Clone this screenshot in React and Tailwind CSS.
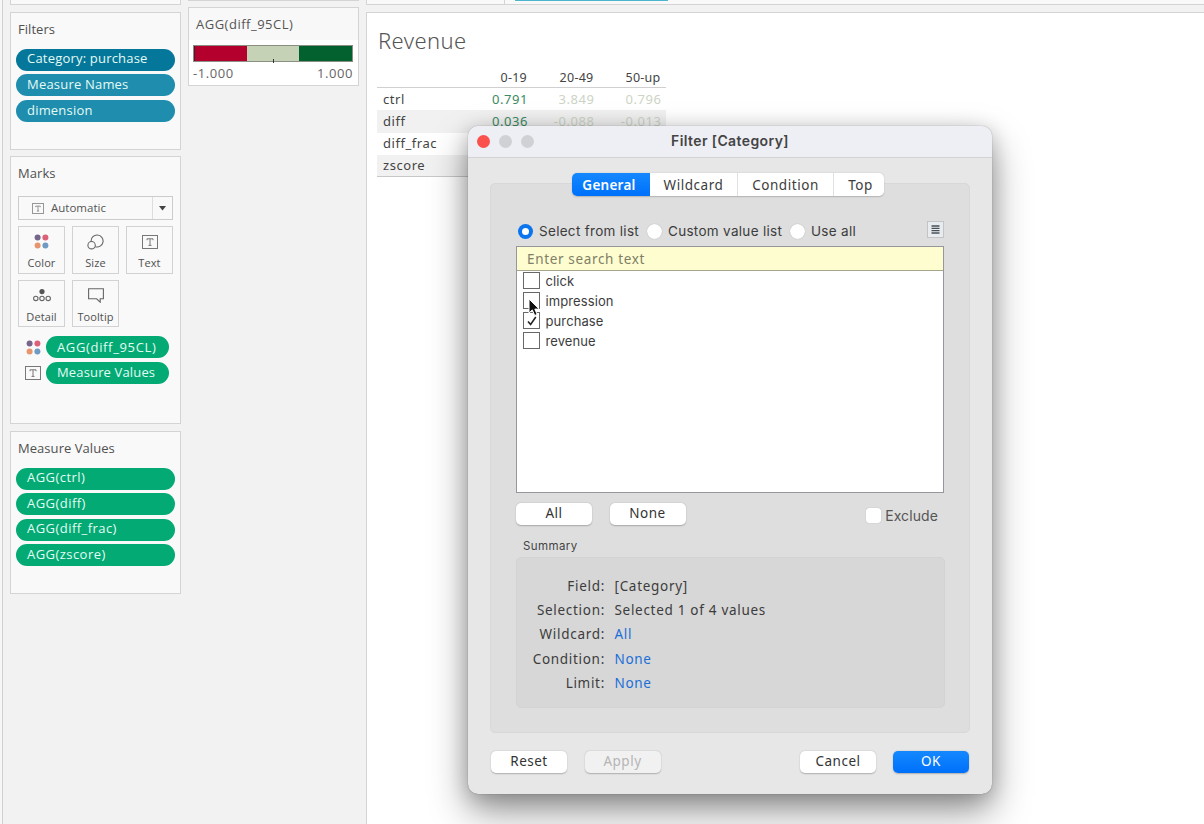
import React, { useState } from "react";

const filterPills = [
  { name: "Category: purchase", color: "bg-[#04779a]" },
  { name: "Measure Names", color: "bg-[#1f8dae]" },
  { name: "dimension", color: "bg-[#1f8dae]" },
];

const measureValues = ["AGG(ctrl)", "AGG(diff)", "AGG(diff_frac)", "AGG(zscore)"];

const rows = [
  { name: "ctrl", values: ["0.791", "3.849", "0.796"] },
  { name: "diff", values: ["0.036", "-0.088", "-0.013"] },
  { name: "diff_frac", values: ["", "", ""] },
  { name: "zscore", values: ["", "", ""] },
];

const tabs = [
  { name: "General", width: "w-[78px] pr-[4px]" },
  { name: "Wildcard", width: "w-[87px]" },
  { name: "Condition", width: "w-[96px]" },
  { name: "Top", width: "w-[51px] pl-[3px]" },
];

const summary = [
  { label: "Field:", value: "[Category]" },
  { label: "Selection:", value: "Selected 1 of 4 values" },
  { label: "Wildcard:", value: "All", link: true },
  { label: "Condition:", value: "None", link: true },
  { label: "Limit:", value: "None", link: true },
];

function TextIcon({ className }) {
  return (
    <svg className={className} viewBox="0 0 16 14" fill="none" stroke="#777" strokeWidth="1">
      <rect x="0.5" y="0.5" width="15" height="13" />
      <path d="M5 5.2V3.8h6v1.4M8 3.8v6.6M6.5 10.4h3" />
    </svg>
  );
}

function ColorIcon({ className }) {
  return (
    <svg className={className} viewBox="0 0 15 15">
      <circle cx="3.6" cy="3.6" r="3" fill="#75658a" />
      <circle cx="11.4" cy="3.6" r="3" fill="#dd5f78" />
      <circle cx="3.6" cy="11.4" r="3" fill="#e8956d" />
      <circle cx="11.4" cy="11.4" r="3" fill="#6f9bc3" />
    </svg>
  );
}

function SizeIcon() {
  return (
    <svg className="w-[17px] h-[16px]" viewBox="0 0 17 16" fill="none" stroke="#666" strokeWidth="1.1">
      <path d="M4.1 7.3A6 6 0 1 1 8.3 12.7" />
      <circle cx="4.6" cy="11.2" r="3.7" />
    </svg>
  );
}

function DetailIcon() {
  return (
    <svg className="w-[18px] h-[14px]" viewBox="0 0 18 14" fill="none" stroke="#666" strokeWidth="1.1">
      <circle cx="9" cy="3.6" r="2.6" fill="#555" stroke="none" />
      <circle cx="2.8" cy="10.4" r="2.2" />
      <circle cx="9" cy="10.4" r="2.2" />
      <circle cx="15.2" cy="10.4" r="2.2" />
    </svg>
  );
}

function TooltipIcon() {
  return (
    <svg className="w-[16px] h-[15px]" viewBox="0 0 16 15" fill="none" stroke="#666" strokeWidth="1.1">
      <path d="M0.6 0.8h14.8v10h-3.2v3.4l-3.6-3.4h-8z" />
    </svg>
  );
}

const markCards = [
  { name: "Color", icon: <ColorIcon className="w-[15px] h-[15px]" /> },
  { name: "Size", icon: <SizeIcon /> },
  { name: "Text", icon: <TextIcon className="w-[16px] h-[14px]" /> },
  { name: "Detail", icon: <DetailIcon /> },
  { name: "Tooltip", icon: <TooltipIcon /> },
];

function Pill({ children, className }) {
  return (
    <div className={`h-[22px] rounded-full flex items-center pl-[11px] text-[13px] text-[#e4fbf4] ${className}`}>
      {children}
    </div>
  );
}

function Panel({ title, className, children }) {
  return (
    <div className={`w-[171px] border border-[#d4d4d4] bg-[#f9f9f9] ${className}`}>
      <div className="h-[35px] pl-[7px] pb-[2px] flex items-center text-[13px] tracking-[0.05px] text-[#505050]">{title}</div>
      {children}
    </div>
  );
}

function Shelves() {
  return (
    <div className="w-[178px] flex flex-col ml-[7px] shrink-0">
      <div className="w-[171px] h-[5px] border border-t-0 border-[#d4d4d4] bg-[#f9f9f9]" />
      <Panel title="Filters" className="mt-[7px] h-[138px]">
        <div className="flex flex-col gap-[3.7px] pl-[5px] pr-[5px] pt-[0.5px]">
          {filterPills.map((p) => (
            <Pill key={p.name} className={`pb-[1px] tracking-[0.2px] ${p.color}`}>{p.name}</Pill>
          ))}
        </div>
      </Panel>
      <Panel title="Marks" className="mt-[6px] h-[268px]">
        <div className="mt-[4px] mx-[7px] h-[24px] border border-[#ccc] flex items-center text-[11.5px] text-[#555]">
          <TextIcon className="w-[12px] h-[11px] ml-[13px]" />
          <span className="ml-[7px]">Automatic</span>
          <span className="ml-auto w-[20px] h-full border-l border-[#ddd] flex items-center justify-center">
            <svg className="w-[7px] h-[5px]" viewBox="0 0 7 5"><path d="M0 0h7L3.5 4.6z" fill="#444" /></svg>
          </span>
        </div>
        <div className="mt-[6px] mx-[7px] grid grid-cols-[47px_47px_47px] gap-x-[7px] gap-y-[6px]">
          {markCards.map((c) => (
            <div key={c.name} className="h-[47.5px] border border-[#d2d2d2] flex flex-col items-center text-[11px] text-[#505050]">
              <div className="h-[29px] w-full flex items-center justify-center">{c.icon}</div>
              <span className="leading-[14px] tracking-[0.1px]">{c.name}</span>
            </div>
          ))}
        </div>
        <div className="mt-[9px] pl-[14px] pr-[11px] flex flex-col gap-[3.7px]">
          <div className="flex items-center">
            <ColorIcon className="w-[15px] h-[15px] ml-[0.5px] mr-[5.5px]" />
            <Pill className="bg-[#03aa74] flex-1 pt-[1px] tracking-[0.65px]">AGG(diff_95CL)</Pill>
          </div>
          <div className="flex items-center">
            <TextIcon className="w-[16px] h-[14px] mr-[5px]" />
            <Pill className="bg-[#03aa74] flex-1 pt-[1px] tracking-[0.15px]">Measure Values</Pill>
          </div>
        </div>
      </Panel>
      <Panel title="Measure Values" className="mt-[7px] h-[163px]">
        <div className="flex flex-col gap-[3.6px] px-[5px] pt-[0.5px]">
          {measureValues.map((m) => (
            <Pill key={m} className="bg-[#03aa74] pb-[1px] tracking-[0.45px]">{m}</Pill>
          ))}
        </div>
      </Panel>
    </div>
  );
}

function Legend() {
  return (
    <div className="w-[171px] shrink-0">
      <div className="h-[1px] bg-[#d4d4d4]" />
      <div className="mt-[6px] h-[79px] border border-[#d4d4d4] bg-white text-[#555]">
        <div className="h-[32px] pl-[7px] pt-[2px] bg-[#f8f8f8] flex items-center text-[13px] tracking-[0.5px]">AGG(diff_95CL)</div>
        <div className="mt-[5px] ml-[4px] mr-[5px] h-[17px] border border-[#8a8f83] grid grid-cols-3 relative">
          <div className="bg-[#b3002d] border-l border-[#4a1a26]" />
          <div className="bg-[#c6d2b6]" />
          <div className="bg-[#03602f]" />
          <span className="absolute left-[79px] bottom-[-2px] w-px h-[4px] bg-[#333]" />
        </div>
        <div className="ml-[4px] mr-[5px] mt-[2px] flex justify-between text-[13px] leading-[18px] tracking-[0.55px] text-[#666]">
          <span>-1.000</span>
          <span>1.000</span>
        </div>
      </div>
    </div>
  );
}

function Sheet() {
  return (
    <div className="flex-1 ml-[7px] flex flex-col">
      <div className="h-[5px] bg-[#f9f9f9] border-b border-l border-[#d4d4d4] flex">
        <div className="w-[138px] border-r border-[#d4d4d4]" />
        <div className="ml-[10px] w-[153px] h-[1px] bg-[#4eb5cf]" />
      </div>
      <div className="mt-[7px] flex-1 bg-white border-t border-l border-[#d4d4d4] pl-[10px] font-['Noto_Sans','Open_Sans',sans-serif]">
        <h1 className="mt-[11px] pl-[1px] h-[32px] leading-[32px] text-[22px] font-light tracking-[0.4px] text-[#555]">Revenue</h1>
        <div className="mt-[10px] w-[289px] text-[13px] text-[#444]">
          <div className="h-[22px] pt-[3px] grid grid-cols-[83px_67px_66.5px_67px] items-center border-b border-[#d0d0d0] text-right text-[12.5px] tracking-[0.25px]">
            <span />
            <span>0-19</span>
            <span>20-49</span>
            <span>50-up</span>
          </div>
          {rows.map((r, i) => (
            <div
              key={r.name}
              className={`h-[22.25px] pt-[1px] grid grid-cols-[84px_67px_66.5px_67px] items-center text-right tracking-[0.55px] ${i % 2 ? "bg-[#f1f1f1]" : ""} ${i === 3 ? "border-b border-[#c8c8c8]" : ""}`}
            >
              <span className="text-left pl-[6px] tracking-[0.55px]">{r.name}</span>
              <span className="text-[#3b8a62]">{r.values[0]}</span>
              <span className="text-[#cdd4c6]">{r.values[1]}</span>
              <span className="text-[#cdd4c6]">{r.values[2]}</span>
            </div>
          ))}
        </div>
      </div>
    </div>
  );
}

function Radio({ checked, onClick }) {
  return (
    <button
      onClick={onClick}
      className={`w-[15px] h-[15px] rounded-full flex items-center justify-center shrink-0 ${checked ? "bg-[#0a75ee]" : "bg-white shadow-[0_0_1px_rgba(0,0,0,0.3)]"}`}
    >
      {checked && <span className="w-[7px] h-[7px] rounded-full bg-white" />}
    </button>
  );
}

function Button({ children, className = "bg-white text-[#333]", onClick }) {
  return (
    <button
      onClick={onClick}
      className={`w-[76px] h-[22px] rounded-[5px] text-[13.5px] leading-[20px] pb-[2px] tracking-[0.5px] shadow-[0_0.5px_1.5px_rgba(0,0,0,0.25)] ${className}`}
    >
      {children}
    </button>
  );
}

function FilterDialog() {
  const [tab, setTab] = useState("General");
  const [mode, setMode] = useState("list");
  const [checked, setChecked] = useState(["purchase"]);
  const values = ["click", "impression", "purchase", "revenue"];

  const toggle = (v) => {
    setChecked(checked.includes(v) ? checked.filter((c) => c !== v) : [...checked, v]);
  };

  return (
    <div className="absolute left-[468px] top-[126px] w-[524px] h-[668px] rounded-[10px] bg-[#e7e7e7] shadow-[0_0_1px_rgba(0,0,0,0.5),0_4px_20px_rgba(0,0,0,0.2),0_18px_38px_rgba(0,0,0,0.4)] flex flex-col font-['Noto_Sans','Open_Sans',sans-serif] text-[#3c3c3c]">
      <div className="h-[32px] shrink-0 rounded-t-[10px] bg-[#eeeff4] border-b border-[#d3d3d6] grid grid-cols-[1fr_auto_1fr] items-center">
        <div className="flex gap-[9px] pl-[9px]">
          <span className="w-[13px] h-[13px] rounded-full bg-[#fa514c]" />
          <span className="w-[13px] h-[13px] rounded-full bg-[#d0d1d5]" />
          <span className="w-[13px] h-[13px] rounded-full bg-[#d0d1d5]" />
        </div>
        <span className="pb-[2px] font-['Inter',sans-serif] font-semibold text-[14px] tracking-[0.4px] text-[#444]">Filter [Category]</span>
      </div>

      <div className="mt-[25px] mx-[22px] h-[550px] shrink-0 rounded-[5px] border border-[#d8d8d8] bg-[#dedede] flex flex-col">
        <div className="-mt-[11px] ml-[81px] h-[23px] flex self-start rounded-[5px] overflow-hidden bg-white shadow-[0_0.5px_1.5px_rgba(0,0,0,0.2)]">
          {tabs.map((t, i) => (
            <button
              key={t.name}
              onClick={() => setTab(t.name)}
              className={`${t.width} text-[13.5px] leading-[22px] ${i > 1 ? "border-l border-[#e0e0e0]" : ""} ${tab === t.name ? "bg-linear-to-b from-[#1588ff] to-[#0070fb] text-white font-semibold tracking-[0.25px]" : "tracking-[0.55px]"}`}
            >
              {t.name}
            </button>
          ))}
        </div>

        <div className="mt-[24px] ml-[27px] mr-[25px] h-[22px] flex items-center font-['Inter',sans-serif] text-[13.5px] tracking-[0.3px]">
          <Radio checked={mode === "list"} onClick={() => setMode("list")} />
          <span className="ml-[6px] w-[108px]">Select from list</span>
          <Radio checked={mode === "custom"} onClick={() => setMode("custom")} />
          <span className="ml-[6px] w-[122px]">Custom value list</span>
          <Radio checked={mode === "all"} onClick={() => setMode("all")} />
          <span className="ml-[6px]">Use all</span>
          <span className="ml-auto mb-[3px] w-[17px] h-[17px] border border-[#c2c5c8] bg-[#e9ecee] flex items-center justify-center">
            <svg className="w-[9px] h-[9px]" viewBox="0 0 9 9" stroke="#47525b" strokeWidth="1.3">
              <path d="M0.5 1h8M0.5 3.3h8M0.5 5.7h8M0.5 8h8" />
            </svg>
          </span>
        </div>

        <div className="mt-[4px] ml-[25px] w-[428px] h-[247px] shrink-0 bg-white border border-[#96979c] font-['Inter',sans-serif] text-[13px] relative">
          <div className="h-[24px] bg-[#fefdcf] border-b border-[#a5a58c] pl-[10px] leading-[24px] font-['Noto_Sans','Open_Sans',sans-serif] text-[13.5px] tracking-[0.65px] text-[#7f7f68]">
            Enter search text
          </div>
          <div>
            {values.map((v) => (
              <div key={v} className="h-[20px] flex items-start pl-[6px]" onClick={() => toggle(v)}>
                <span className="mt-[1px] w-[17px] h-[17px] border border-[#686868] flex items-center justify-center">
                  {checked.includes(v) && (
                    <svg className="w-[10px] h-[10px]" viewBox="0 0 10 10" fill="none" stroke="#222" strokeWidth="1.6">
                      <path d="M1 5.5l2.6 3L8.8 1" />
                    </svg>
                  )}
                </span>
                <span className="ml-[5.5px] leading-[21px] tracking-[0.1px]">{v}</span>
              </div>
            ))}
          </div>
          {/* mouse pointer */}
          <svg className="absolute left-[11px] top-[51px] w-[12px] h-[19px]" viewBox="0 0 12 19">
            <path d="M1 1v14l3.3-3.1 2.4 5.6 2.5-1.1-2.4-5.3h4.4z" fill="#111" stroke="#fff" strokeWidth="1" />
          </svg>
        </div>

        <div className="mt-[10px] ml-[25px] mr-[31px] h-[26px] flex items-start">
          <Button onClick={() => setChecked(values)}>All</Button>
          <Button className="bg-white text-[#333] ml-[17.5px]" onClick={() => setChecked([])}>None</Button>
          <label className="ml-auto mt-[2px] flex items-center font-['Inter',sans-serif] text-[14px] tracking-[0.1px] text-[#555]">
            <span className="w-[15px] h-[15px] mr-[4px] rounded-[3px] bg-white shadow-[0_0_1px_rgba(0,0,0,0.3)]" />
            Exclude
          </label>
        </div>

        <div className="mt-[8px] ml-[32px] h-[18px] leading-[18px] font-['Inter',sans-serif] text-[11.5px] tracking-[0.4px] text-[#444]">Summary</div>
        <div className="mt-[2px] ml-[25px] w-[429px] h-[151px] shrink-0 rounded-[5px] border border-[#d3d3d3] bg-[#d7d7d7] pt-[15.5px] text-[13.5px] tracking-[0.7px]">
          {summary.map((s) => (
            <div key={s.label} className="h-[24.4px] leading-[24px] flex">
              <span className="w-[88px] text-right">{s.label}</span>
              <span className={`ml-[9.5px] ${s.link ? "text-[#1a6fd8]" : ""}`}>{s.value}</span>
            </div>
          ))}
        </div>
      </div>

      <div className="mt-[18px] mx-[23px] flex">
        <Button>Reset</Button>
        <Button className="bg-[#f1f1f1] text-[#b5b5b5] ml-[17.5px]">Apply</Button>
        <Button className="bg-white text-[#333] ml-auto">Cancel</Button>
        <Button className="bg-linear-to-b from-[#1588ff] to-[#0070fb] text-white ml-[17px]">OK</Button>
      </div>
    </div>
  );
}

export default function App() {
  return (
    <div className="relative w-[1204px] h-[824px] overflow-hidden bg-[#f2f2f2] flex font-['Open_Sans',sans-serif]">
      <div className="w-[3px] shrink-0 bg-[#f7f7f7] border-r border-[#d0d0d0]" />
      <Shelves />
      <Legend />
      <Sheet />
      <FilterDialog />
    </div>
  );
}
